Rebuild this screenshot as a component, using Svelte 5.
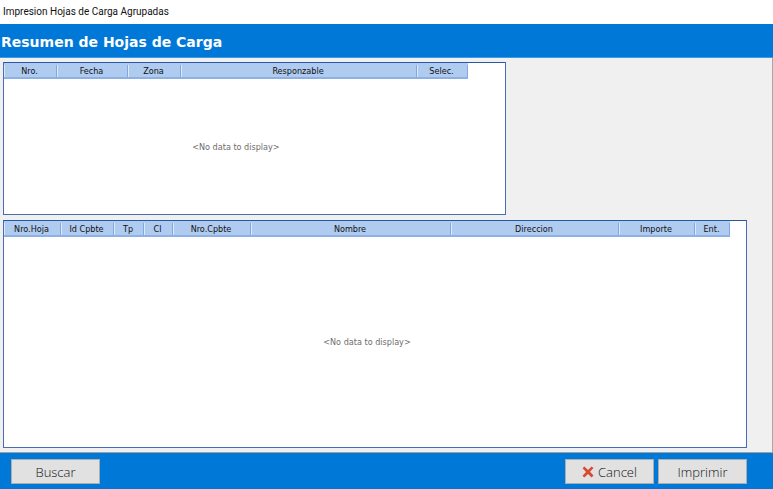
<script>
  const loads = [
    { title: 'Nro.', width: 53 },
    { title: 'Fecha', width: 71 },
    { title: 'Zona', width: 53 },
    { title: 'Responzable', width: 236 },
    { title: 'Selec.', width: 51 }
  ];
  const details = [
    { title: 'Nro.Hoja', width: 57 },
    { title: 'Id Cpbte', width: 53 },
    { title: 'Tp', width: 30 },
    { title: 'Cl', width: 29 },
    { title: 'Nro.Cpbte', width: 78 },
    { title: 'Nombre', width: 200 },
    { title: 'Direccion', width: 168 },
    { title: 'Importe', width: 76 },
    { title: 'Ent.', width: 35 }
  ];
</script>

{#snippet grid(columns, label)}
  <table aria-label={label}>
    <thead>
      <tr>
        {#each columns as column}
          <th scope="col" style="width: {column.width}px">{column.title}</th>
        {/each}
        <td class="rest"></td>
      </tr>
    </thead>
    <tbody>
      <tr><td class="empty" colspan={columns.length + 1}>&lt;No data to display&gt;</td></tr>
    </tbody>
  </table>
{/snippet}

<div class="window">
  <div class="caption">Impresion Hojas de Carga Agrupadas</div>
  <header><h1>Resumen de Hojas de Carga</h1></header>
  <main>
    <section class="loads">{@render grid(loads, 'Hojas de carga')}</section>
    <section class="details">{@render grid(details, 'Comprobantes')}</section>
  </main>
  <footer>
    <button type="button">Buscar</button>
    <div class="actions">
      <button type="button">
        <svg width="12" height="12" viewBox="0 0 12 12" aria-hidden="true">
          <path d="M.6 2.2 2.4.6 6 4 9.6.4 11.5 2 8 5.8 11.5 9.6 9.6 11.5 6 8 2.3 11.5.5 9.7 4 6Z" fill="#d9492f" />
        </svg>
        Cancel
      </button>
      <button type="button">Imprimir</button>
    </div>
  </footer>
</div>

<style>
  :global(body) {
    margin: 0;
  }

  .window {
    display: flex;
    flex-direction: column;
    min-height: 100vh;
    background: #f0f0f0;
    color: #111;
    font-family: 'DejaVu Sans Condensed', 'DejaVu Sans', sans-serif;
    font-size: 9px;
  }

  .caption {
    height: 24px;
    padding-left: 3px;
    background: #fff;
    font: 10px/24px Roboto, sans-serif;
  }

  header {
    height: 33px;
    padding-left: 1px;
    background: #0078d7;
    border-bottom: 1px solid #3d9be6;
  }

  h1 {
    margin: 0;
    color: #fff;
    font: bold 14px/36px 'DejaVu Sans', sans-serif;
  }

  main {
    display: flex;
    flex: 1;
    flex-direction: column;
    gap: 5px;
    padding: 4px 25px 4px 3px;
    border-right: 1px solid #a8a8a8;
    border-bottom: 1px solid #a0a0a0;
  }

  section {
    display: flex;
    box-sizing: border-box;
    background: #fff;
    border: 1px solid #4a6cb8;
    border-top-color: #2858a4;
  }

  .loads {
    flex: 153 0 0px;
    width: 67.6%;
  }

  .details {
    flex: 228 0 0px;
  }

  table {
    width: 100%;
    table-layout: fixed;
    border-collapse: separate;
    border-spacing: 0;
  }

  th {
    box-sizing: border-box;
    height: 16px;
    padding: 2px 2px 0 0;
    background:
      linear-gradient(#82a6df, #82a6df) right 2px / 1px 12px no-repeat,
      linear-gradient(#dce9fc, #dce9fc) left 2px / 1px 12px no-repeat,
      #afcbf0;
    border-bottom: 2px solid #8fb0e4;
    font-weight: normal;
    line-height: 12px;
    text-align: center;
  }

  td {
    padding: 0;
  }

  .empty {
    color: #6e6e6e;
    text-align: center;
    vertical-align: middle;
  }

  .loads .empty {
    padding-right: 37px;
  }

  .details .empty {
    padding-right: 16px;
  }

  footer {
    display: flex;
    align-items: center;
    justify-content: space-between;
    height: 36px;
    padding: 0 26px 0 11px;
    background: #0078d7;
  }

  .actions {
    display: flex;
    gap: 4px;
  }

  button {
    display: flex;
    align-items: center;
    justify-content: center;
    gap: 4px;
    box-sizing: border-box;
    width: 89px;
    height: 25px;
    padding: 2px 0 0;
    background: #e1e1e1;
    border: 1px solid #adadad;
    color: #111;
    font: 300 13px/21px 'Open Sans', sans-serif;
  }
</style>
